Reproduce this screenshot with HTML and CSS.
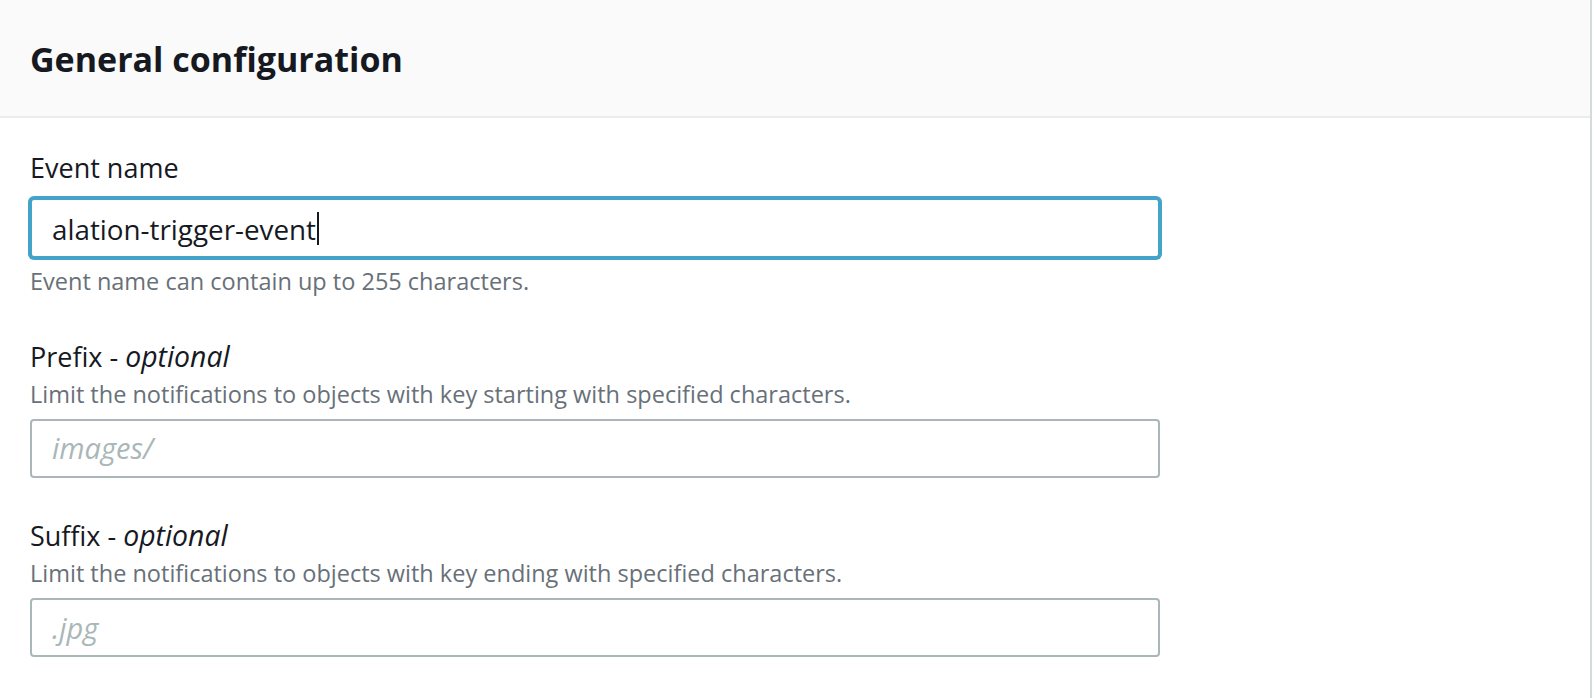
FILE: index.html
```html
<!DOCTYPE html>
<html lang="en">
<head>
<meta charset="utf-8">
<title>General configuration</title>
<link rel="stylesheet" href="styles.css">
</head>
<body>
<div class="panel">
  <div class="panel-header">
    <h2 class="panel-title">General configuration</h2>
  </div>
  <div class="panel-body">
    <div class="field">
      <label class="field-label">Event name</label>
      <div class="text-input is-focused" role="textbox"><span class="value">alation-trigger-event</span><span class="caret"></span></div>
      <p class="field-hint">Event name can contain up to 255 characters.</p>
    </div>
    <div class="field">
      <label class="field-label" for="prefix">Prefix - <em>optional</em></label>
      <p class="field-desc">Limit the notifications to objects with key starting with specified characters.</p>
      <input id="prefix" class="text-input" type="text" placeholder="images/">
    </div>
    <div class="field">
      <label class="field-label" for="suffix">Suffix - <em>optional</em></label>
      <p class="field-desc">Limit the notifications to objects with key ending with specified characters.</p>
      <input id="suffix" class="text-input" type="text" placeholder=".jpg">
    </div>
  </div>
</div>
</body>
</html>
```
FILE: styles.css
```css
html, body {
  margin: 0;
  padding: 0;
  background: #ffffff;
}

body {
  font-family: "Open Sans", "Noto Sans", sans-serif;
  color: #16191f;
}

.panel {
  width: 1590px;
  min-height: 100vh;
  border-right: 2px solid #d5dbdb;
}

.panel-header {
  background: #fafafa;
  border-bottom: 2px solid #eaeded;
  padding: 36px 30px 34px;
}

.panel-title {
  margin: 0;
  font-size: 34px;
  line-height: 46px;
  font-weight: 700;
  color: #16191f;
}

.panel-body {
  padding: 30px 30px 0;
  display: flex;
  flex-direction: column;
  gap: 38.5px;
}

.field {
  display: flex;
  flex-direction: column;
  align-items: flex-start;
}

.field-label {
  height: 40px;
  font-size: 27px;
  line-height: 40px;
  color: #16191f;
}

.field-label em {
  font-style: italic;
  font-size: 28.4px;
  line-height: 1;
}

.field-desc,
.field-hint {
  margin: 0;
  font-size: 23.5px;
  line-height: 34px;
  color: #687078;
}

.field-hint {
  margin-top: 6px;
}

.text-input {
  box-sizing: border-box;
  width: 1130px;
  height: 59px;
  margin: 8px 0 0;
  padding: 0 20px;
  border: 2px solid #aab7b8;
  border-radius: 4px;
  background: #ffffff;
  font-family: "Open Sans", "Noto Sans", sans-serif;
  font-size: 27.8px;
  color: #16191f;
  outline: none;
}

.text-input::placeholder {
  color: #aab7b8;
  font-style: italic;
  font-size: 29px;
  opacity: 1;
}

.text-input.is-focused {
  display: flex;
  align-items: center;
  height: 60px;
  margin-top: 10px;
  padding-top: 2px;
  border-color: #44a3c8;
  box-shadow: 0 0 0 2px #44a3c8;
}

.caret {
  display: inline-block;
  width: 2px;
  height: 33px;
  margin-left: 1px;
  background: #16191f;
  align-self: center;
  transform: translateY(-1px);
}
```
